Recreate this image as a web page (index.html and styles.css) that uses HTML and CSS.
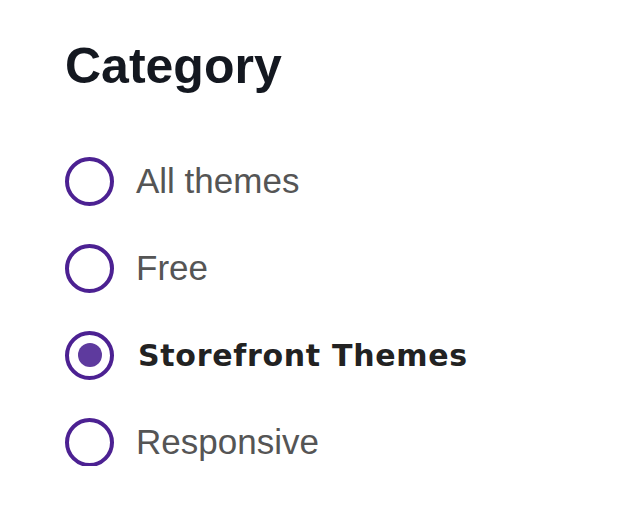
FILE: index.html
```html
<!DOCTYPE html>
<html>
<head>
<meta charset="utf-8">
<link rel="stylesheet" href="styles.css">
</head>
<body>
<section class="filter">
  <h2 class="title">Category</h2>
  <ul class="options">
    <li class="option"><span class="radio"></span><span class="label">All themes</span></li>
    <li class="option"><span class="radio"></span><span class="label">Free</span></li>
    <li class="option selected"><span class="radio"><span class="dot"></span></span><span class="label">Storefront Themes</span></li>
    <li class="option"><span class="radio"></span><span class="label">Responsive</span></li>
  </ul>
</section>
</body>
</html>
```
FILE: styles.css
```css
html, body {
  margin: 0;
  padding: 0;
  background: #ffffff;
}
.filter {
  padding: 38px 0 0 65px;
}
.title {
  margin: 0;
  font-family: "Liberation Sans", Arial, sans-serif;
  font-weight: 700;
  font-size: 50px;
  line-height: 56px;
  color: #141820;
}
.options {
  list-style: none;
  margin: 63px 0 0 0;
  padding: 0;
  display: flex;
  flex-direction: column;
  gap: 39px;
}
.option {
  display: flex;
  align-items: center;
  gap: 22px;
  height: 48px;
}
.radio {
  box-sizing: border-box;
  width: 49px;
  height: 49px;
  border: 4px solid #4c2192;
  border-radius: 50%;
  display: flex;
  align-items: center;
  justify-content: center;
  flex: none;
}
.dot {
  width: 24px;
  height: 24px;
  border-radius: 50%;
  background: #5e3a9e;
}
.label {
  font-family: "Liberation Sans", Arial, sans-serif;
  font-size: 35px;
  color: #555555;
}
.selected .label {
  font-family: "DejaVu Sans", Verdana, sans-serif;
  font-weight: 700;
  font-size: 30px;
  letter-spacing: 0.7px;
  color: #222222;
  margin-left: 2px;
}
```
